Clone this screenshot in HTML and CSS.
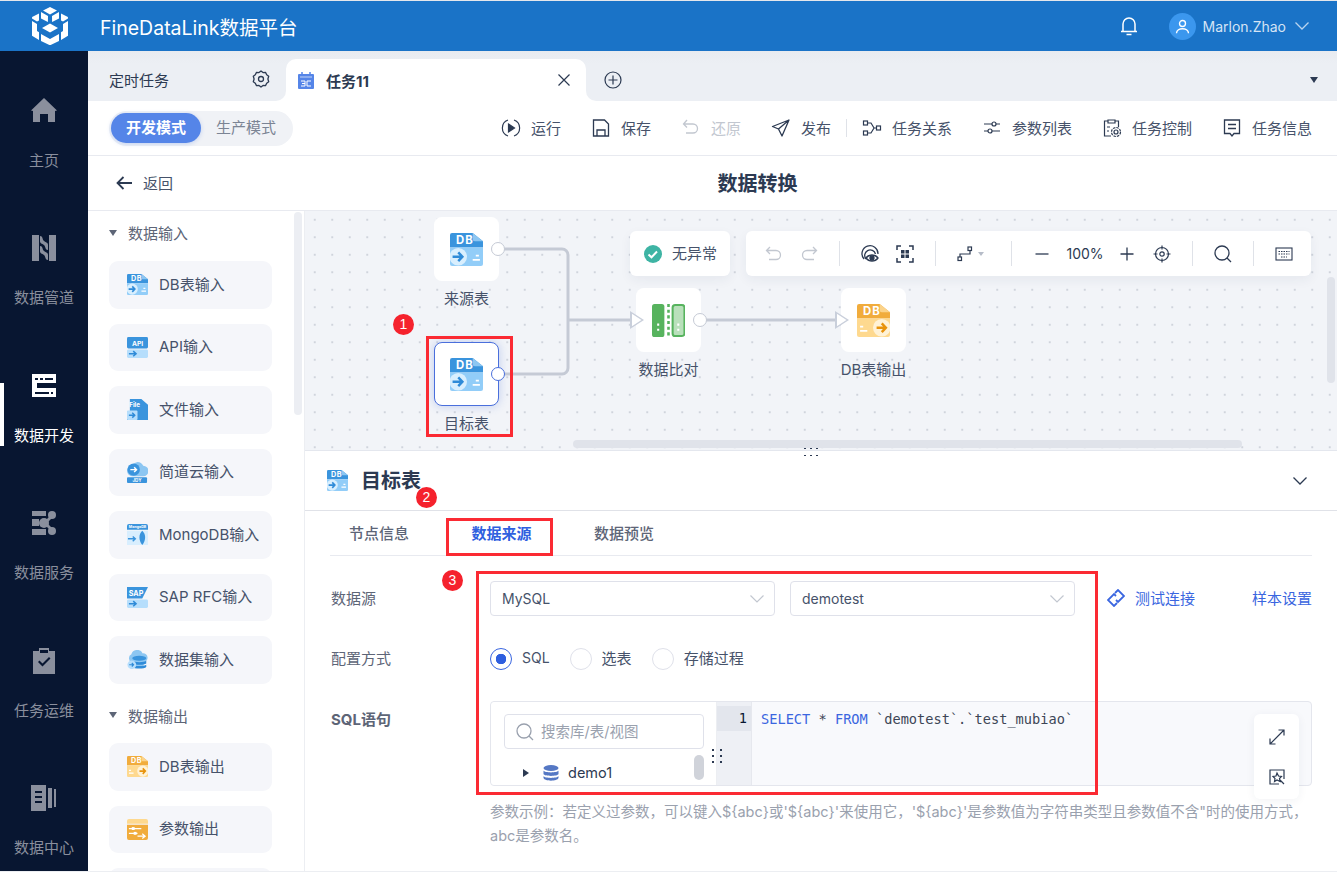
FILE: index.html
```html
<!DOCTYPE html>
<html lang="zh-CN">
<head>
    <meta charset="UTF-8">
    <title>FineDataLink数据平台</title>
    <link rel="stylesheet" href="styles.css">
</head>
<body>
    <svg class="defs" width="0" height="0">
        <symbol id="db-in" viewBox="0 0 32 32">
            <path d="M0 14V2a2 2 0 0 1 2-2h20l10 8v6z" fill="#3a94dd"/>
            <path d="M22 0l10 8h-8a2 2 0 0 1-2-2z" fill="#8cc6f2"/>
            <path d="M0 14h32v16a2 2 0 0 1-2 2H2a2 2 0 0 1-2-2z" fill="#92cdf8"/>
            <circle cx="8" cy="23" r="8.5" fill="#d9effe"/>
            <path d="M2.5 23h9M8 18.8l4 4.2-4 4.2" fill="none" stroke="#2f8bd8" stroke-width="2.4"/>
            <path d="M25 22h3M22 26h7" stroke="#fff" stroke-width="1.8"/>
        </symbol>
        <symbol id="db-out" viewBox="0 0 32 32">
            <path d="M0 14V2a2 2 0 0 1 2-2h20l10 8v6z" fill="#f1ac3c"/>
            <path d="M22 0l10 8h-8a2 2 0 0 1-2-2z" fill="#fbd38a"/>
            <path d="M0 14h32v16a2 2 0 0 1-2 2H2a2 2 0 0 1-2-2z" fill="#fed98f"/>
            <circle cx="24" cy="23" r="8.5" fill="#fff2d6"/>
            <path d="M19 23h9M24 18.8l4 4.2-4 4.2" fill="none" stroke="#e8930c" stroke-width="2.4"/>
            <path d="M3 22h3M3 26h7" stroke="#fff" stroke-width="1.8"/>
        </symbol>
        <symbol id="api-in" viewBox="0 0 22 22">
            <rect width="22" height="12" rx="1.5" fill="#3a94dd"/>
            <rect y="13" width="22" height="9" rx="1.5" fill="#b6defc"/>
            <path d="M2 17.5h7M6.5 14.8l3 2.7-3 2.7" fill="none" stroke="#2f8bd8" stroke-width="1.6"/>
        </symbol>
        <symbol id="file-in" viewBox="0 0 22 22">
            <path d="M3 0h12l7 6v16H0V13h3z" fill="#3a94dd"/>
            <rect y="12" width="11" height="10" rx="1" fill="#b6defc"/>
            <path d="M2 17h6M5.5 14.5l2.6 2.5-2.6 2.5" fill="none" stroke="#2f8bd8" stroke-width="1.5"/>
        </symbol>
        <symbol id="jdy-in" viewBox="0 0 22 22">
            <path d="M6 15a6 6 0 0 1 0-12 7 7 0 0 1 5-3 7 7 0 0 1 6 4 5.5 5.5 0 0 1 0 11z" fill="#8cc6f2"/>
            <circle cx="7" cy="8" r="6.5" fill="#3a94dd"/>
            <path d="M3.5 8h6M7.5 5.5l2.5 2.5-2.5 2.5" fill="none" stroke="#fff" stroke-width="1.5"/>
            <rect y="16" width="21" height="6" rx="1" fill="#3a94dd"/>
        </symbol>
        <symbol id="mongo-in" viewBox="0 0 22 22">
            <path d="M0 2a2 2 0 0 1 2-2h18a2 2 0 0 1 2 2v4H0z" fill="#3a94dd"/>
            <path d="M0 7h22v15H0z" fill="#d8eefe"/>
            <path d="M1 15.5h7M6 13l2.7 2.5L6 18" fill="none" stroke="#3a94dd" stroke-width="1.5"/>
            <path d="M16 7c4 3.5 4 10 0 15-4-5-4-11.5 0-15z" fill="#3a94dd"/>
        </symbol>
        <symbol id="sap-in" viewBox="0 0 22 22">
            <path d="M0 0h22l-6 12H0z" fill="#3a94dd"/>
            <rect y="13" width="22" height="9" rx="1.5" fill="#b6defc"/>
            <path d="M2 17.5h7M6.5 14.8l3 2.7-3 2.7" fill="none" stroke="#2f8bd8" stroke-width="1.6"/>
        </symbol>
        <symbol id="set-in" viewBox="0 0 24 22">
            <path d="M5 14a5 5 0 0 1 0-9 7 7 0 0 1 13-1 5 5 0 0 1 1 10v6H5z" fill="#8cc6f2"/>
            <ellipse cx="14" cy="9.5" rx="8" ry="2.8" fill="#3a94dd"/>
            <path d="M6 12.5c2 2 14 2 16 0v3c-2 2-14 2-16 0zM6 17c2 2 14 2 16 0v2.5c-2 2.5-14 2.5-16 0z" fill="#2f8bd8"/>
            <circle cx="5.5" cy="17" r="5" fill="#b6defc"/>
            <path d="M2.5 17h5M5.5 15l2 2-2 2" fill="none" stroke="#2f8bd8" stroke-width="1.3"/>
        </symbol>
        <symbol id="param-out" viewBox="0 0 22 22">
            <path d="M0 2a2 2 0 0 1 2-2h18a2 2 0 0 1 2 2v3H0z" fill="#fed98f"/>
            <path d="M0 6h22v14a2 2 0 0 1-2 2H2a2 2 0 0 1-2-2z" fill="#f1ac3c"/>
            <path d="M2 10h13M2 15h9M11 18h8M16 15.5l3 2.5-3 2.5" fill="none" stroke="#fff" stroke-width="1.3"/>
            <rect x="5" y="8.5" width="3" height="3" fill="#fff"/>
            <rect x="7" y="13.5" width="3" height="3" fill="#fff"/>
        </symbol>
        <symbol id="compare" viewBox="0 0 32 32">
            <rect width="12" height="32" rx="2.5" fill="#57b35e"/>
            <rect x="20" y="1" width="11.5" height="30" rx="2.5" fill="#b9e0bb" stroke="#57b35e" stroke-width="2"/>
            <path d="M16 0v32" stroke="#57b35e" stroke-width="2.5" stroke-dasharray="3 2.5"/>
            <path d="M6 19v2M6 24v2M25.5 19v2M25.5 24v2" stroke="#fff" stroke-width="2"/>
        </symbol>
    </svg>

    <header class="topbar">
        <svg class="logo" viewBox="0 0 36 38" fill="#fff">
            <path d="M18 0l7 3.5-7 4-7-4zM9 5l7 4-.1 6-6.9-3.5zM27 5l-7 4 .1 6 6.900-3.5z"/>
            <path d="M7 6.5v7l-2 1.1L0 11.500l.1-1.500zM29 6.5v7l2 1.1 5-3.100-.1-1.500z"/>
            <path d="M0 14l5 3v7l2 1.200V33l-7-4.300zM36 14l-5 3v7l-2 1.200V33l7-4.300z"/>
            <path d="M10 21l8-4.500 8 4.500-8 4.500zM9 27l9 5 9-5v7l-9 4.300L9 34z"/>
        </svg>
        <span class="brand">FineDataLink数据平台</span>
        <svg class="bell" viewBox="0 0 18 20" fill="none" stroke="#fff" stroke-width="1.5">
            <path d="M3 15V8a6 6 0 0 1 12 0v7M1 15.5h16"/>
            <path d="M6.5 18.5h5"/>
        </svg>
        <span class="avatar">
            <svg viewBox="0 0 20 20" fill="none" stroke="#fff" stroke-width="1.8">
                <circle cx="10" cy="6" r="4"/>
                <path d="M2 19c0-8 16-8 16 0"/>
            </svg>
        </span>
        <span class="username">Marlon.Zhao</span>
        <svg class="user-arrow" viewBox="0 0 14 8" fill="none" stroke="#b9d4ef" stroke-width="1.3"><path d="M.5.5L7 7 13.500.5"/></svg>
    </header>

    <div class="shell">
        <nav class="sidenav">
            <a class="nav-item">
                <svg viewBox="0 0 26 26" fill="currentColor"><path d="M13 0l13 12.5-2 .5v11h-7v-8H9v8H2V13l-2-.5z"/></svg>
                <span>主页</span>
            </a>
            <a class="nav-item">
                <svg viewBox="0 0 26 26" fill="currentColor">
                    <path d="M1 0h7v26H1zM18 0h7v26h-7z"/>
                    <path d="M9 1c3 0 2 3 4 5s4 1 4 4v5c-3 0-2-3-4-5s-4-1-4-4zM9 11c3 0 2 3 4 5s4 1 4 4v5c-3 0-2-3-4-5s-4-1-4-4z"/>
                </svg>
                <span>数据管道</span>
            </a>
            <a class="nav-item active">
                <svg viewBox="0 0 26 26" fill="currentColor" fill-rule="evenodd">
                    <path d="M1 1h24v9H1zM4 5v2h3V5zm5 0v2h3V5zm5 0v2h8V5z"/>
                    <path d="M1 10h5v5H1zM1 15h24v9H1zM4 19v2h14v-2zm16 0v2h2v-2z"/>
                </svg>
                <span>数据开发</span>
            </a>
            <a class="nav-item">
                <svg viewBox="0 0 26 26" fill="currentColor">
                    <path d="M1 1h14v5H1zM1 9h7v7H1zM1 19h14v6H1z"/>
                    <circle cx="21" cy="5" r="4"/><circle cx="21" cy="21" r="4"/><circle cx="13" cy="13" r="5"/>
                    <path d="M13 12l8-8 2 2-8 8zM13 14l8 8 2-2-8-8z"/>
                </svg>
                <span>数据服务</span>
            </a>
            <a class="nav-item">
                <svg viewBox="0 0 26 26" fill="currentColor" fill-rule="evenodd">
                    <path d="M2 3h6V0h10v3h6v23H2zM9 2v3h8V2zM7 14l1.5-1.5 3 3L18 9l1.5 1.5-8 8z"/>
                </svg>
                <span>任务运维</span>
            </a>
            <a class="nav-item">
                <svg viewBox="0 0 26 26" fill="currentColor" fill-rule="evenodd">
                    <path d="M0 0h15v26H0zM4 6v2h7V6zm0 5v2h7v-2zm0 5v2h7v-2zM17 3h4v20h-4zM23 4h2v18h-2z"/>
                </svg>
                <span>数据中心</span>
            </a>
        </nav>

        <main class="content">
            <div class="tabs">
                <div class="tab-fixed">
                    <span>定时任务</span>
                    <svg class="icon18" viewBox="0 0 18 18" fill="none" stroke="#2c3a52" stroke-width="1.3">
                        <path d="M9 1l2 1.600 2.500-.2 1.200 2.300 2 1.500-.8 2.800.8 2.800-2 1.500-1.200 2.300-2.500-.2L9 17l-2-1.600-2.500.2-1.200-2.300-2-1.500.8-2.800-.8-2.800 2-1.500 1.200-2.300 2.500.2z" stroke-linejoin="round"/>
                        <circle cx="9" cy="9" r="2.5"/>
                    </svg>
                </div>
                <div class="tab-active">
                    <svg class="tab-cal" viewBox="0 0 16 17">
                        <rect y="2" width="16" height="15" rx="1" fill="#5585e8"/>
                        <path d="M4 0v3M12 0v3" stroke="#5585e8" stroke-width="1.5"/>
                        <path d="M2 5h12" stroke="#c4d5f7"/>
                        <path d="M3 9h4v5H3M4 11.5h3M13 9H9v5h4" fill="none" stroke="#fff"/>
                    </svg>
                    <b>任务11</b>
                    <svg class="tab-close" viewBox="0 0 12 12" fill="none" stroke="#2c3a52" stroke-width="1.2"><path d="M.5.5l11 11M11.500.5l-11 11"/></svg>
                </div>
                <div class="tab-rest">
                    <svg class="icon18" viewBox="0 0 18 18" fill="none" stroke="#2c3a52" stroke-width="1.2">
                        <circle cx="9" cy="9" r="8"/><path d="M9 4.5v9M4.5 9h9"/>
                    </svg>
                    <i class="tab-more"></i>
                </div>
            </div>

            <div class="toolbar">
                <div class="mode-switch">
                    <span class="mode on">开发模式</span>
                    <span class="mode">生产模式</span>
                </div>
                <div class="actions">
                    <a class="action">
                        <svg viewBox="0 0 20 20" fill="none" stroke="#2c3a52" stroke-width="1.2"><path d="M7 2a8.5 8.5 0 0 0 0 16M13 2a8.5 8.5 0 0 1 0 16"/><path d="M7.5 6l6 4-6 4z" fill="#2c3a52"/></svg>
                        <span>运行</span>
                    </a>
                    <a class="action">
                        <svg viewBox="0 0 20 20" fill="none" stroke="#2c3a52" stroke-width="1.3"><path d="M2.5 2h11l4 4v12h-15z"/><path d="M6 18v-6h8v6"/></svg>
                        <span>保存</span>
                    </a>
                    <a class="action off">
                        <svg viewBox="0 0 20 20" fill="none" stroke="#c2c7d0" stroke-width="1.3"><path d="M6 2L2.5 6 6 9.5M3 6h9a4.500 4.500 0 0 1 0 9H5"/></svg>
                        <span>还原</span>
                    </a>
                    <a class="action">
                        <svg viewBox="0 0 20 20" fill="none" stroke="#2c3a52" stroke-width="1.3"><path d="M18 2L1.5 8.5l6 2.5 3.500 7zM18 2L7.500 11" stroke-linejoin="round"/></svg>
                        <span>发布</span>
                    </a>
                    <i class="action-sep"></i>
                    <a class="action">
                        <svg viewBox="0 0 20 20" fill="none" stroke="#2c3a52" stroke-width="1.2"><rect x="1.5" y="3" width="4" height="4"/><rect x="1.5" y="13" width="4" height="4"/><rect x="14.5" y="8" width="4" height="4"/><path d="M5.5 5H9l3 5-3 5H5.5M12 10h2.5"/></svg>
                        <span>任务关系</span>
                    </a>
                    <a class="action">
                        <svg viewBox="0 0 20 20" fill="none" stroke="#2c3a52" stroke-width="1.2"><path d="M2 6h8M14 6h4M2 13h4M10 13h8"/><circle cx="12" cy="6" r="2"/><circle cx="8" cy="13" r="2"/></svg>
                        <span>参数列表</span>
                    </a>
                    <a class="action">
                        <svg viewBox="0 0 20 20" fill="none" stroke="#2c3a52" stroke-width="1.2"><path d="M9 18H2.5V3H6M13 3h3.500v6M6 2h7v3H6zM5 9h3M5 13h2"/><circle cx="14" cy="14" r="2"/><circle cx="14" cy="14" r="4.5" stroke-dasharray="2.5 1"/></svg>
                        <span>任务控制</span>
                    </a>
                    <a class="action">
                        <svg viewBox="0 0 20 20" fill="none" stroke="#2c3a52" stroke-width="1.3"><path d="M2.5 2h15v13.5h-5.5L10 18l-2-2.500H2.500zM6 6.500h8M6 10.500h8"/></svg>
                        <span>任务信息</span>
                    </a>
                </div>
            </div>

            <div class="titlebar">
                <a class="back">
                    <svg viewBox="0 0 16 14" fill="none" stroke="#2c3a52" stroke-width="1.8"><path d="M16 7H2M7.5 1L1.5 7l6 6"/></svg>
                    <span>返回</span>
                </a>
                <h1 class="page-title">数据转换</h1>
            </div>

            <div class="workspace">
                <aside class="palette">
                    <div class="group-head"><i class="caret"></i>数据输入</div>
                    <div class="node-item"><svg viewBox="0 0 32 32"><use href="#db-in"/><text class="ic-txt ic-db" x="14.5" y="10.8">DB</text></svg><span>DB表输入</span></div>
                    <div class="node-item"><svg viewBox="0 0 22 22"><use href="#api-in"/><text class="ic-txt" x="11" y="9.5" font-size="7">API</text></svg><span>API输入</span></div>
                    <div class="node-item"><svg viewBox="0 0 22 22"><use href="#file-in"/><text class="ic-txt" x="8" y="8" font-size="6.5">File</text></svg><span>文件输入</span></div>
                    <div class="node-item"><svg viewBox="0 0 22 22"><use href="#jdy-in"/><text class="ic-txt" x="10.5" y="21" font-size="4.8">JDY</text></svg><span>简道云输入</span></div>
                    <div class="node-item"><svg viewBox="0 0 22 22"><use href="#mongo-in"/><text class="ic-txt" x="11" y="4.6" font-size="3.8">MongoDB</text></svg><span>MongoDB输入</span></div>
                    <div class="node-item"><svg viewBox="0 0 22 22"><use href="#sap-in"/><text class="ic-txt" x="9.5" y="9" font-size="7.5">SAP</text></svg><span>SAP RFC输入</span></div>
                    <div class="node-item"><svg viewBox="0 0 24 22"><use href="#set-in"/></svg><span>数据集输入</span></div>
                    <div class="group-head"><i class="caret"></i>数据输出</div>
                    <div class="node-item"><svg viewBox="0 0 32 32"><use href="#db-out"/><text class="ic-txt ic-db" x="14.5" y="10.8">DB</text></svg><span>DB表输出</span></div>
                    <div class="node-item"><svg viewBox="0 0 22 22"><use href="#param-out"/></svg><span>参数输出</span></div>
                    <div class="node-item"></div>
                    <i class="palette-thumb"></i>
                </aside>

                <section class="editor">
                    <div class="canvas">
                        <svg class="links" width="1032" height="239" fill="none" stroke="#c5cad5" stroke-width="3">
                            <path d="M198 38h59a6 6 0 0 1 6 6v65M198 163h59a6 6 0 0 0 6-6v-48M263 109h64M400 109h132"/>
                        </svg>
                        <div class="flow-node n-source">
                            <div class="tile"><svg viewBox="0 0 32 32"><use href="#db-in"/><text class="ic-txt ic-db" x="14.5" y="10.8">DB</text></svg><i class="port"></i></div>
                            <span>来源表</span>
                        </div>
                        <div class="flow-node n-target">
                            <div class="tile selected"><svg viewBox="0 0 32 32"><use href="#db-in"/><text class="ic-txt ic-db" x="14.5" y="10.8">DB</text></svg><i class="port blue"></i></div>
                            <span>目标表</span>
                        </div>
                        <div class="flow-node n-compare">
                            <div class="tile"><svg viewBox="0 0 32 32"><use href="#compare"/></svg><i class="port"></i><i class="inlet"></i></div>
                            <span>数据比对</span>
                        </div>
                        <div class="flow-node n-output">
                            <div class="tile"><svg viewBox="0 0 32 32"><use href="#db-out"/><text class="ic-txt ic-db" x="14.5" y="10.8">DB</text></svg><i class="inlet"></i></div>
                            <span>DB表输出</span>
                        </div>

                        <div class="status-card">
                            <svg viewBox="0 0 18 18"><circle cx="9" cy="9" r="9" fill="#3eb4a4"/><path d="M4.5 9.5l3 2.800 5.500-5.800" fill="none" stroke="#fff" stroke-width="2"/></svg>
                            <span>无异常</span>
                        </div>
                        <div class="tool-card">
                            <svg class="tl" viewBox="0 0 18 18" fill="none" stroke="#c2c7d0" stroke-width="1.3"><path d="M5 2L1.5 5.5 5 9M2 5.5h9a4.5 4.5 0 0 1 0 9H4"/></svg>
                            <svg class="tl" viewBox="0 0 18 18" fill="none" stroke="#c2c7d0" stroke-width="1.3"><path d="M13 2l3.5 3.5L13 9M16 5.5H7a4.5 4.5 0 0 0 0 9h7"/></svg>
                            <i class="tl-sep"></i>
                            <svg class="tl" viewBox="0 0 18 18" fill="none" stroke="#2c3a52" stroke-width="1.3"><path d="M3 14a8 8 0 1 1 14-5M5 14a5.5 5.5 0 1 1 9.5-5"/><path d="M5 13c3-4 9-4 12 0-3 4-9 4-12 0z" fill="#fff"/><circle cx="11" cy="13" r="2" fill="#2c3a52"/></svg>
                            <svg class="tl" viewBox="0 0 18 18" fill="none" stroke="#2c3a52" stroke-width="1.5"><path d="M1 5V1h4M13 1h4v4M17 13v4h-4M5 17H1v-4"/><path d="M5 5h3.5v3.5H5zM9.5 5H13v3.5H9.5zM5 9.5h3.5V13H5zM9.5 9.5H13V13H9.5z" fill="#2c3a52" stroke="none"/></svg>
                            <i class="tl-sep"></i>
                            <span class="tl-route">
                                <svg viewBox="0 0 16 16" fill="none" stroke="#2c3a52" stroke-width="1.2"><rect x="1" y="11" width="3.5" height="3.5"/><rect x="11" y="1" width="3.5" height="3.5"/><path d="M3 11V8h10V4.5"/></svg>
                                <i></i>
                            </span>
                            <i class="tl-sep"></i>
                            <svg class="tl" viewBox="0 0 18 18" stroke="#2c3a52" stroke-width="1.3"><path d="M2.5 9h13"/></svg>
                            <span class="zoom-val">100%</span>
                            <svg class="tl" viewBox="0 0 18 18" stroke="#2c3a52" stroke-width="1.3"><path d="M2.5 9h13M9 2.5v13"/></svg>
                            <svg class="tl" viewBox="0 0 18 18" fill="none" stroke="#2c3a52" stroke-width="1.2"><circle cx="9" cy="9" r="6.5"/><circle cx="9" cy="9" r="2.2"/><path d="M9 .5v4M9 13.5v4M.5 9h4M13.5 9h4"/></svg>
                            <i class="tl-sep"></i>
                            <svg class="tl" viewBox="0 0 18 18" fill="none" stroke="#2c3a52" stroke-width="1.3"><circle cx="8" cy="8" r="7"/><path d="M13 13l4 4"/></svg>
                            <i class="tl-sep"></i>
                            <svg class="tl" viewBox="0 0 18 18" fill="none" stroke="#2c3a52" stroke-width="1.1"><rect x="1" y="3" width="16" height="12"/><path d="M3.5 6.5h11M3.5 9h11M6 12h6" stroke-dasharray="1.5 1"/></svg>
                        </div>
                        <i class="canvas-hbar"></i>
                        <i class="canvas-vbar"></i>
                        <i class="drag-dots"></i>
                    </div>

                    <div class="detail">
                        <div class="detail-head">
                            <svg class="detail-icon" viewBox="0 0 32 32"><use href="#db-in"/><text class="ic-txt ic-db" x="14.5" y="10.8">DB</text></svg>
                            <b>目标表</b>
                            <svg class="detail-arrow" viewBox="0 0 14 8" fill="none" stroke="#2c3a52" stroke-width="1.3"><path d="M.5.5L7 7 13.5.5"/></svg>
                        </div>
                        <div class="detail-tabs">
                            <a>节点信息</a>
                            <a class="on">数据来源</a>
                            <a>数据预览</a>
                        </div>
                        <div class="form">
                            <div class="form-row row-source">
                                <label>数据源</label>
                                <div class="select"><span>MySQL</span><svg viewBox="0 0 14 8" fill="none" stroke="#c2c7d0" stroke-width="1.2"><path d="M.5.5L7 7 13.5.5"/></svg></div>
                                <div class="select"><span>demotest</span><svg viewBox="0 0 14 8" fill="none" stroke="#c2c7d0" stroke-width="1.2"><path d="M.5.5L7 7 13.5.5"/></svg></div>
                                <a class="link test-link">
                                    <svg viewBox="0 0 18 18" fill="none" stroke="#3a66e0" stroke-width="1.8"><path d="M8 4l3-3 6 6-6 6-2-2M10 14l-3 3-6-6 6-6 2 2"/></svg>
                                    <span>测试连接</span>
                                </a>
                                <a class="link">样本设置</a>
                            </div>
                            <div class="form-row row-radio">
                                <label>配置方式</label>
                                <span class="radio on"><span class="latin">SQL</span></span>
                                <span class="radio"><span>选表</span></span>
                                <span class="radio"><span>存储过程</span></span>
                            </div>
                            <div class="form-row row-sql">
                                <label class="strong">SQL语句</label>
                                <div class="sql-box">
                                    <div class="db-tree">
                                        <div class="tree-search">
                                            <svg viewBox="0 0 18 18" fill="none" stroke="#9aa1ae" stroke-width="1.3"><circle cx="8" cy="8" r="7"/><path d="M13 13l4 4"/></svg>
                                            <span>搜索库/表/视图</span>
                                        </div>
                                        <div class="tree-row">
                                            <i class="tree-caret"></i>
                                            <svg viewBox="0 0 16 16" fill="#5578c4"><ellipse cx="8" cy="3" rx="7.5" ry="3"/><path d="M.5 5.5c1 2.5 14 2.5 15 0V9c-1 2.5-14 2.5-15 0zM.5 11c1 2.5 14 2.5 15 0v2c-1 3.5-14 3.5-15 0z"/></svg>
                                            <span>demo1</span>
                                        </div>
                                        <i class="tree-thumb"></i>
                                    </div>
                                    <i class="split-dots"></i>
                                    <div class="gutter"><span>1</span></div>
                                    <pre class="code"><span class="kw">SELECT</span> * <span class="kw">FROM</span> `demotest`.`test_mubiao`</pre>
                                    <div class="float-tools">
                                        <svg viewBox="0 0 16 16" fill="none" stroke="#2c3a52" stroke-width="1.2"><path d="M1 15L15 1M9.5 1H15v5.5M1 9.5V15h5.5"/></svg>
                                        <svg viewBox="0 0 16 16" fill="none" stroke="#2c3a52" stroke-width="1.2"><path d="M10 15H1V1h14v9"/><path d="M8 4l1.5 3 3 .5-2 2 .5 3-3-1.5-2.5 1.5.5-3-2-2 3-.5zM11 11l4 4"/></svg>
                                    </div>
                                </div>
                            </div>
                            <p class="hint">参数示例：若定义过参数，可以键入${abc}或'${abc}'来使用它，'${abc}'是参数值为字符串类型且参数值不含"时的使用方式，abc是参数名。</p>
                        </div>
                    </div>
                </section>
            </div>
        </main>
    </div>

    <i class="mark box-1"></i>
    <i class="mark box-2"></i>
    <i class="mark box-3"></i>
    <span class="badge badge-1">1</span>
    <span class="badge badge-2">2</span>
    <span class="badge badge-3">3</span>
</body>
</html>
```

FILE: styles.css
```css
* {
    margin: 0;
    padding: 0;
    box-sizing: border-box;
}

html, body {
    height: 100%;
    overflow: hidden;
}

body {
    position: relative;
    display: flex;
    flex-direction: column;
    font-family: Inter, "Noto Sans CJK SC", sans-serif;
    font-size: 15px;
    color: #2c3a52;
    background: #fff;
    border-top: 1px solid #e4e7ec;
    border-bottom: 1px solid #eceef2;
}

i {
    display: block;
    font-style: normal;
}

.defs {
    position: absolute;
}

.ic-txt {
    font-weight: 700;
    fill: #fff;
    text-anchor: middle;
}

.ic-db {
    font-size: 11px;
    letter-spacing: 1px;
}

/* top bar */
.topbar {
    display: flex;
    align-items: center;
    flex: none;
    height: 50px;
    padding-left: 32px;
    background: #1a73c7;
    color: #fff;
}

.logo {
    width: 36px;
    height: 38px;
}

.brand {
    margin-left: 32px;
    font-size: 19.5px;
}

.bell {
    width: 18px;
    height: 20px;
    margin-left: auto;
}

.avatar {
    display: flex;
    align-items: center;
    justify-content: center;
    width: 27px;
    height: 27px;
    margin-left: 31px;
    border-radius: 50%;
    background: #3b97ee;
}

.avatar svg {
    width: 15px;
    height: 15px;
}

.username {
    margin-left: 7px;
    color: #d5e4f5;
    font-size: 14px;
}

.user-arrow {
    width: 14px;
    height: 8px;
    margin: 0 28px 0 9px;
}

/* left navigation */
.shell {
    display: flex;
    flex: 1;
    min-height: 0;
}

.sidenav {
    flex: none;
    width: 88px;
    padding-top: 46.5px;
    background: #081631;
    overflow: hidden;
}

.nav-item {
    position: relative;
    display: flex;
    flex-direction: column;
    align-items: center;
    height: 137.5px;
    color: #8a8f9d;
    font-size: 15px;
}

.nav-item svg {
    width: 26px;
    height: 26px;
    margin-bottom: 26px;
}

.nav-item span {
    line-height: 22px;
}

.nav-item.active {
    color: #fff;
}

.nav-item.active::before {
    content: "";
    position: absolute;
    left: 0;
    top: 10px;
    width: 4px;
    height: 63px;
    background: #fff;
}

/* work area */
.content {
    display: flex;
    flex-direction: column;
    flex: 1;
    min-width: 0;
}

.tabs {
    display: flex;
    flex: none;
    height: 50px;
    background: linear-gradient(#e8ebf0 0, #eceff4 12px, #eceff4 50%, #fff 50%);
}

.tab-fixed {
    display: flex;
    align-items: center;
    justify-content: space-between;
    width: 198px;
    padding: 6px 16px 0 21px;
    background: linear-gradient(#e8ebf0 0, #eceff4 12px);
    border-bottom-right-radius: 10px;
}

.tab-active {
    display: flex;
    align-items: center;
    width: 300px;
    height: 42px;
    margin-top: 8px;
    padding: 0 14px 0 12px;
    background: #fff;
    border-radius: 10px 10px 0 0;
}

.tab-active b {
    margin-left: 12px;
    font-weight: 700;
}

.tab-cal {
    width: 16px;
    height: 17px;
}

.tab-close {
    width: 12px;
    height: 12px;
    margin-left: auto;
    margin-right: 2px;
}

.tab-rest {
    display: flex;
    align-items: center;
    justify-content: space-between;
    flex: 1;
    padding: 8px 19px 0 18px;
    background: linear-gradient(#e8ebf0 0, #eceff4 12px);
    border-bottom-left-radius: 10px;
}

.icon18 {
    width: 18px;
    height: 18px;
}

.tab-more {
    border-left: 4.5px solid transparent;
    border-right: 4.5px solid transparent;
    border-top: 6px solid #2c3a52;
}

.toolbar {
    display: flex;
    align-items: center;
    justify-content: space-between;
    flex: none;
    height: 55px;
    padding: 0 25px 0 21px;
    border-bottom: 1px solid #e8eaf0;
}

.mode-switch {
    display: flex;
    align-items: center;
    width: 184px;
    height: 35px;
    padding-left: 2px;
    background: #f0f2f6;
    border-radius: 18px;
}

.mode {
    width: 90px;
    line-height: 30px;
    text-align: center;
    color: #7b8494;
}

.mode.on {
    color: #fff;
    font-weight: 700;
    background: #5585e8;
    border-radius: 15px;
    box-shadow: 0 1px 4px rgba(85, 133, 232, .3);
}

.actions {
    display: flex;
    align-items: center;
    gap: 30px;
}

.action {
    display: flex;
    align-items: center;
    gap: 10px;
    color: #46526a;
}

.action svg {
    width: 20px;
    height: 20px;
}

.action span {
    padding-bottom: 2px;
}

.action.off {
    color: #c2c7d0;
}

.action-sep {
    width: 1px;
    height: 18px;
    margin: 0 -15px;
    background: #dfe2e8;
}

.titlebar {
    position: relative;
    display: flex;
    align-items: center;
    justify-content: center;
    flex: none;
    height: 55px;
    padding-left: 90px;
    border-bottom: 1px solid #e8eaf0;
}

.back {
    position: absolute;
    left: 28px;
    display: flex;
    align-items: center;
    gap: 11px;
    color: #46526a;
}

.back svg {
    width: 16px;
    height: 14px;
}

.back span {
    padding-bottom: 2px;
}

.page-title {
    padding-bottom: 2px;
    font-size: 20px;
    font-weight: 700;
    color: #2c3a52;
}

.workspace {
    display: flex;
    flex: 1;
    min-height: 0;
}

/* node palette */
.palette {
    position: relative;
    flex: none;
    width: 217px;
    padding: 5px 32px 0 21px;
    overflow: hidden;
    border-right: 1px solid #eceef2;
}

.group-head {
    display: flex;
    align-items: center;
    height: 35px;
    margin-bottom: 10px;
    padding-bottom: 2px;
    color: #5d6577;
}

.node-item + .group-head {
    margin-bottom: 9.5px;
}

.caret {
    margin-right: 11px;
    border-left: 4.5px solid transparent;
    border-right: 4.5px solid transparent;
    border-top: 6px solid #5d6577;
}

.node-item {
    display: flex;
    align-items: center;
    gap: 11px;
    width: 163px;
    height: 47.5px;
    margin-bottom: 15px;
    padding-left: 18px;
    color: #46526a;
    background: #f5f6fa;
    border-radius: 9px;
}

.node-item span {
    padding-bottom: 3px;
}

.node-item svg {
    width: 21px;
    height: 21px;
}

.palette-thumb {
    position: absolute;
    left: 206px;
    top: 1px;
    width: 8px;
    height: 203px;
    background: #eceef3;
    border-radius: 4px;
}

.editor {
    display: flex;
    flex-direction: column;
    flex: 1;
    min-width: 0;
}

/* flow canvas */
.canvas {
    position: relative;
    flex: none;
    height: 240px;
    background-color: #f2f4f8;
    background-image: radial-gradient(circle, #d0d4dc 1px, transparent 1.3px);
    background-size: 17.5px 17.5px;
    background-position: 1px 0;
    border-bottom: 1px solid #e4e7ee;
}

.links {
    position: absolute;
    left: 0;
    top: 0;
}

.flow-node {
    position: absolute;
    display: flex;
    flex-direction: column;
    align-items: center;
    width: 65px;
    color: #46526a;
    white-space: nowrap;
}

.flow-node span {
    margin-top: 8px;
    line-height: 20px;
}

.n-source {
    left: 129px;
    top: 6px;
}

.n-target {
    left: 129px;
    top: 131px;
}

.n-compare {
    left: 331px;
    top: 77px;
}

.n-output {
    left: 536px;
    top: 77px;
}

.tile {
    position: relative;
    display: flex;
    align-items: center;
    justify-content: center;
    width: 65px;
    height: 64px;
    background: #fff;
    border-radius: 8px;
}

.tile svg {
    width: 33px;
    height: 33px;
}

.tile.selected {
    border: 1.5px solid #4a6fdc;
    box-shadow: 0 0 10px rgba(74, 111, 220, .3);
}

.port {
    position: absolute;
    right: -6px;
    top: 25px;
    width: 14px;
    height: 14px;
    background: #fff;
    border: 1.5px solid #c5cad5;
    border-radius: 50%;
}

.port.blue {
    right: -7px;
    top: 24px;
    border-color: #4a6fdc;
}

.inlet {
    position: absolute;
    left: -6px;
    top: 23px;
    width: 14px;
    height: 18px;
    background: #c9cfdb;
    clip-path: polygon(0 0, 100% 50%, 0 100%);
}

.inlet::after {
    content: "";
    position: absolute;
    left: 1.5px;
    top: 2.5px;
    width: 10px;
    height: 13px;
    background: #fff;
    clip-path: polygon(0 0, 100% 50%, 0 100%);
}

.status-card,
.tool-card {
    position: absolute;
    top: 20px;
    display: flex;
    align-items: center;
    height: 45px;
    background: #fff;
    border-radius: 6px;
    box-shadow: 0 4px 12px rgba(40, 50, 80, .06);
}

.status-card {
    left: 325px;
    width: 100px;
    padding-left: 14px;
    gap: 10px;
    color: #46526a;
}

.status-card svg {
    width: 18px;
    height: 18px;
}

.status-card span {
    padding-bottom: 2px;
}

.tool-card {
    left: 441px;
    width: 565px;
    padding-left: 19px;
}

.tl {
    flex: none;
    width: 18px;
    height: 18px;
    margin-right: 17px;
}

.tl-sep {
    flex: none;
    width: 1px;
    height: 25px;
    margin: 0 21px 0 4px;
    background: #dfe2e8;
}

.tl-route {
    display: flex;
    align-items: center;
    gap: 5px;
    margin-right: 23px;
}

.tl-route svg {
    width: 16px;
    height: 16px;
}

.tl-route i {
    border-left: 3.5px solid transparent;
    border-right: 3.5px solid transparent;
    border-top: 4.5px solid #b6bcc8;
}

.zoom-val {
    width: 38px;
    margin: 0 14px 0 -2px;
    font-size: 14px;
    text-align: center;
}

.canvas-hbar {
    position: absolute;
    left: 268px;
    top: 229px;
    width: 669px;
    height: 8px;
    background: #e0e3ea;
    border-radius: 4px;
}

.canvas-vbar {
    position: absolute;
    right: 2px;
    top: 66px;
    width: 8px;
    height: 106px;
    background: #e0e3ea;
    border-radius: 4px;
}

.drag-dots {
    position: absolute;
    left: 497px;
    top: 234px;
    width: 18px;
    height: 14px;
    background-image: radial-gradient(circle, #2c3a52 .9px, transparent 1.1px);
    background-size: 6px 7px;
    z-index: 2;
}

/* detail panel */
.detail {
    flex: 1;
    min-height: 0;
    overflow: hidden;
}

.detail-head {
    display: flex;
    align-items: center;
    height: 60px;
    padding: 0 30px 0 22px;
    border-bottom: 1px solid #e0e2e8;
}

.detail-icon {
    width: 21px;
    height: 21px;
    margin-right: 13px;
}

.detail-head b {
    padding-bottom: 2px;
    font-size: 20px;
    font-weight: 700;
}

.detail-arrow {
    width: 14px;
    height: 8px;
    margin-left: auto;
}

.detail-tabs {
    display: flex;
    gap: 62.5px;
    height: 45px;
    margin: 0 25px;
    padding-left: 19px;
    line-height: 45px;
    color: #5d6577;
    border-bottom: 1px solid #e8eaf0;
}

.detail-tabs a {
    font-weight: 500;
}

.detail-tabs .on {
    color: #2f5fdf;
    font-weight: 700;
}

.form {
    padding: 25px 25px 0 26px;
}

.form-row {
    display: flex;
    align-items: center;
}

.form-row label {
    flex: none;
    width: 159px;
    padding-bottom: 2px;
    color: #5d6577;
}

.form-row label.strong {
    align-self: flex-start;
    margin-top: 7px;
    padding-bottom: 0;
    font-weight: 700;
}

.select {
    display: flex;
    align-items: center;
    justify-content: space-between;
    width: 285px;
    height: 35px;
    margin-right: 15px;
    padding: 0 10px 0 11px;
    font-size: 14px;
    color: #46526a;
    border: 1px solid #dfe1ea;
    border-radius: 4px;
}

.select span {
    padding-bottom: 1px;
}

.select svg {
    width: 14px;
    height: 8px;
}

.link {
    padding-bottom: 2px;
    color: #3a66e0;
}

.test-link {
    display: flex;
    align-items: center;
    gap: 10px;
    margin-left: 17px;
    margin-right: 57px;
}

.test-link svg {
    width: 18px;
    height: 18px;
}

.row-radio {
    height: 25px;
    margin-top: 30px;
}

.radio {
    display: flex;
    align-items: center;
    gap: 10px;
    margin-right: 20px;
    color: #46526a;
}

.radio span {
    padding-bottom: 2px;
}

.radio .latin {
    font-size: 14px;
}

.radio::before {
    content: "";
    width: 20px;
    height: 20px;
    border: 1px solid #dfe1ea;
    border-radius: 50%;
}

.radio.on::before {
    border-color: #3a66e0;
    background: radial-gradient(circle, #2f5fdf 5px, #fff 5.5px);
}

.row-sql {
    align-items: flex-start;
    margin-top: 30px;
}

.sql-box {
    position: relative;
    display: flex;
    width: 822px;
    height: 85px;
    background: #f8f9fc;
    border: 1px solid #e4e6ed;
    border-radius: 4px;
}

.db-tree {
    position: relative;
    flex: none;
    width: 225px;
    padding: 12px 0 0 13px;
    background: #fff;
    border-radius: 4px 0 0 4px;
    overflow: hidden;
}

.tree-search {
    display: flex;
    align-items: center;
    gap: 7px;
    width: 200px;
    height: 35px;
    padding-left: 11px;
    color: #9aa1ae;
    font-size: 14.5px;
    border: 1px solid #dfe1ea;
    border-radius: 4px;
}

.tree-search svg {
    width: 18px;
    height: 18px;
}

.tree-search span {
    padding-bottom: 2px;
}

.tree-row {
    display: flex;
    align-items: center;
    margin-top: 15px;
    padding-left: 19px;
    font-size: 14.5px;
    color: #2c3a52;
}

.tree-row svg {
    width: 16px;
    height: 16px;
    margin: 0 9px 0 14px;
}

.tree-caret {
    border-top: 4.5px solid transparent;
    border-bottom: 4.5px solid transparent;
    border-left: 6px solid #2c3a52;
}

.tree-thumb {
    position: absolute;
    right: 12px;
    top: 53px;
    width: 10px;
    height: 25px;
    background: #d0d3da;
    border-radius: 5px;
}

.split-dots {
    position: absolute;
    left: 218px;
    top: 45px;
    width: 14px;
    height: 18px;
    background-image: radial-gradient(circle, #2c3a52 .9px, transparent 1.1px);
    background-size: 8px 6px;
    z-index: 1;
}

.gutter {
    flex: none;
    width: 36px;
    padding-top: 4px;
    background: #eef0f5;
    border-left: 1px solid #eceef2;
    border-right: 1px solid #e6e8ee;
    font: 13.6px/25px "DejaVu Sans Mono", monospace;
    color: #081631;
    text-align: right;
}

.gutter span {
    display: block;
    padding-right: 4px;
    background: #e3e6ed;
}

.code {
    padding: 5px 0 0 9px;
    font: 13.65px/25px "DejaVu Sans Mono", monospace;
    color: #3d4656;
}

.kw {
    color: #3a66e0;
}

.float-tools {
    position: absolute;
    right: 12px;
    top: 12px;
    display: flex;
    flex-direction: column;
    align-items: center;
    gap: 24px;
    width: 45px;
    height: 85px;
    padding-top: 15px;
    background: #fff;
    border-radius: 6px;
    box-shadow: 0 2px 10px rgba(40, 50, 80, .06);
}

.float-tools svg {
    width: 16px;
    height: 16px;
}

.hint {
    width: 822px;
    margin: 14px 0 0 159px;
    font-size: 14.5px;
    line-height: 24px;
    color: #9aa1ae;
}

/* red annotation marks laid over the screenshot */
.mark {
    position: absolute;
    border: 3px solid #fb2a33;
    pointer-events: none;
}

.box-1 {
    left: 426px;
    top: 335px;
    width: 87px;
    height: 101px;
}

.box-2 {
    left: 446px;
    top: 517px;
    width: 107px;
    height: 38px;
}

.box-3 {
    left: 476px;
    top: 570px;
    width: 622px;
    height: 224px;
}

.badge {
    position: absolute;
    width: 21px;
    height: 21px;
    font: 14px/21px "Liberation Sans", sans-serif;
    text-align: center;
    color: #fff;
    background: #f5222d;
    border-radius: 50%;
}

.badge-1 {
    left: 393px;
    top: 313px;
}

.badge-2 {
    left: 416px;
    top: 486px;
}

.badge-3 {
    left: 442px;
    top: 569px;
}
```
